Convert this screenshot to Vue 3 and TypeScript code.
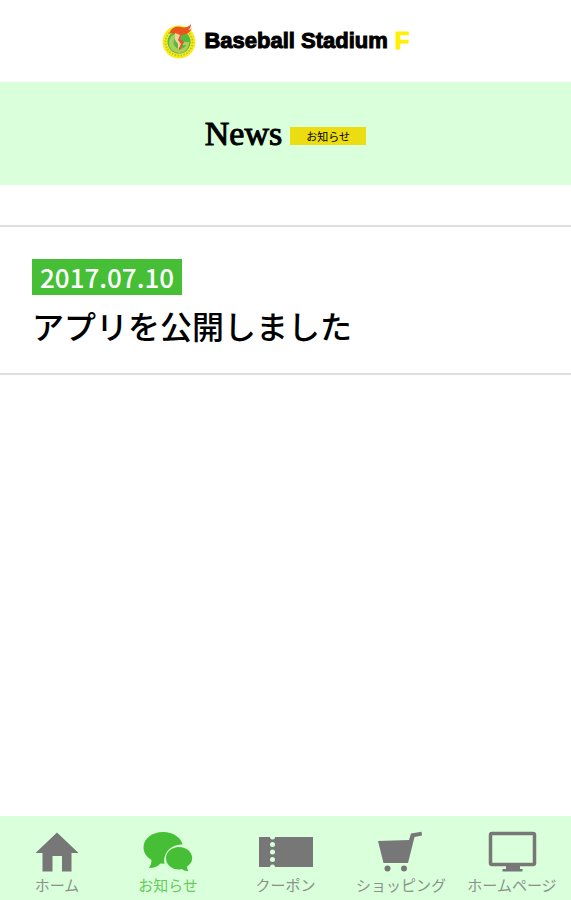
<script setup lang="ts">
import { ref } from 'vue'

type TabId = 'home' | 'news' | 'coupon' | 'shop' | 'web'

interface Tab {
  id: TabId
  label: string
}

interface NewsItem {
  date: string
  title: string
}

const tabs: Tab[] = [
  { id: 'home', label: 'ホーム' },
  { id: 'news', label: 'お知らせ' },
  { id: 'coupon', label: 'クーポン' },
  { id: 'shop', label: 'ショッピング' },
  { id: 'web', label: 'ホームページ' },
]

const news: NewsItem[] = [{ date: '2017.07.10', title: 'アプリを公開しました' }]

const active = ref<TabId>('news')
</script>

<template>
  <div class="app">
    <header class="brand">
      <svg class="emblem" viewBox="0 0 36 36" aria-hidden="true">
        <circle cx="18" cy="19" r="16.500" fill="#f5ec1c" />
        <circle cx="18" cy="19" r="13.500" fill="none" stroke="#c9c12c" stroke-width="2" stroke-dasharray="1.500 1.500" />
        <circle cx="18" cy="19" r="11.500" fill="#58b947" />
        <path d="M19 13a6.500 6.500 0 1 0 6 9h-6v-3h9a10 10 0 1 1-9-9z" fill="#a9d05a" />
        <path d="M8 11C10 5 15 2 20 4c4 1 8 0 10-3 0 3-1 5-3 6 2 0 3-1 4-2-2 5-6 7-11 7l-1 4 4 3-4 8-2-1 1-6-3-4 1-5c-3 0-5-1-8-1z" fill="#e9561f" />
        <path d="M14 10l5 2-2 5 3 4-3 6 0-6-3-4z" fill="#f0d4a0" />
      </svg>
      <span class="brand-name">Baseball Stadium</span>
      <span class="brand-mark">F</span>
    </header>

    <div class="banner">
      <h1>News</h1>
      <span class="banner-tag">お知らせ</span>
    </div>

    <main>
      <ul class="news-list">
        <li v-for="item in news" :key="item.date">
          <a href="#" @click.prevent>
            <time class="date">{{ item.date }}</time>
            <span class="title">{{ item.title }}</span>
          </a>
        </li>
      </ul>
    </main>

    <nav class="tabs">
      <button
        v-for="tab in tabs"
        :key="tab.id"
        type="button"
        class="tab"
        :class="{ active: active === tab.id }"
        @click="active = tab.id"
      >
        <svg class="tab-icon" viewBox="0 0 56 42" fill="currentColor" aria-hidden="true">
          <path v-if="tab.id === 'home'" d="M28 1.500 49.500 22H42.500V40.500H33V25H23.500V40.500H13.500V22H6.500Z" />
          <template v-else-if="tab.id === 'news'">
            <path d="M23 1C12 1 3.500 7.500 3.500 16.500c0 5 3 9.500 8 12.500 0 3-1 5.500-2.500 8 5 0 8.500-1.500 11.500-4.500l4 .2C22.500 22 31 13.500 42.500 13.500 41 6.500 33 1 23 1Z" />
            <path d="M39 16c-7.500 0-13 5-13 11.200S31.500 38.500 39 38.500l3-.3c2 1.300 4 2 6.500 2-1-1.500-1.500-3-1.300-5 3-2 5-4.500 5-8C52.200 21 46.500 16 39 16Z" />
          </template>
          <path
            v-else-if="tab.id === 'coupon'"
            fill-rule="evenodd"
            d="M1 6H12a2.500 2.500 0 0 0 5 0H55V36H17a2.500 2.500 0 0 0-5 0H1ZM14.500 11a2.500 2.500 0 1 0 0 5 2.500 2.500 0 0 0 0-5ZM14.500 18.500a2.500 2.500 0 1 0 0 5 2.500 2.500 0 0 0 0-5ZM14.500 26a2.500 2.500 0 1 0 0 5 2.500 2.500 0 0 0 0-5Z"
          />
          <template v-else-if="tab.id === 'shop'">
            <path d="M5 10 36 9 38 2.500 48.500.8 49 4.500 41.500 6 35 32H10.500Z" />
            <circle cx="14.500" cy="37.500" r="3" />
            <circle cx="31" cy="37.500" r="3" />
          </template>
          <template v-else>
            <rect x="6.500" y="2.500" width="44" height="31" rx="1.500" fill="none" stroke="currentColor" stroke-width="3.500" />
            <path d="M22 34H36V38H38.500V40.500H18.500V38H22Z" />
          </template>
        </svg>
        <span>{{ tab.label }}</span>
      </button>
    </nav>
  </div>
</template>

<style>
body {
  margin: 0;
  background: #fff;
}
</style>

<style scoped>
.app {
  min-height: 100vh;
  display: flex;
  flex-direction: column;
  font-family: "Noto Sans CJK JP", sans-serif;
  color: #000;
}

.brand {
  height: 82px;
  display: flex;
  align-items: center;
  justify-content: center;
  gap: 7px;
}

.emblem {
  width: 36px;
  height: 36px;
}

.brand-name {
  font: bold 22px/36px "Liberation Sans", sans-serif;
  -webkit-text-stroke: 1px #000;
}

.brand-mark {
  font: bold 24px/36px "Liberation Sans", sans-serif;
  color: #fff000;
  -webkit-text-stroke: 1px #fff000;
}

.banner {
  height: 103px;
  display: flex;
  align-items: center;
  justify-content: center;
  gap: 8px;
  background: #d9ffdb;
}

.banner h1 {
  margin: 0;
  font: 34px/40px "Liberation Serif", serif;
  -webkit-text-stroke: 1px #000;
}

.banner-tag {
  width: 76px;
  margin-top: 4px;
  background: #ebdd12;
  font-size: 11px;
  line-height: 18px;
  text-align: center;
}

main {
  flex: 1;
  padding-top: 40px;
}

.news-list {
  margin: 0;
  padding: 0;
  list-style: none;
  border-top: 2px solid #dedede;
}

.news-list li {
  border-bottom: 2px solid #dedede;
}

.news-list a {
  display: flex;
  flex-direction: column;
  align-items: flex-start;
  gap: 10px;
  padding: 32px 32px 28px;
  color: inherit;
  text-decoration: none;
}

.date {
  padding: 0 8px;
  background: #46bf37;
  color: #fff;
  font-size: 26px;
  font-weight: 500;
  line-height: 36px;
}

.title {
  font-size: 32px;
  font-weight: 500;
  line-height: 40px;
}

.tabs {
  position: sticky;
  bottom: 0;
  display: grid;
  grid-template-columns: 114fr 108fr 127fr 104fr 118fr;
  background: #d9ffdb;
}

.tab {
  display: flex;
  flex-direction: column;
  align-items: center;
  gap: 2px;
  min-width: 0;
  padding: 15px 0 5px;
  border: 0;
  background: none;
  color: #777;
  font-family: inherit;
  font-size: 15px;
  line-height: 20px;
  white-space: nowrap;
  cursor: pointer;
}

.tab span {
  opacity: 0.8;
}

.tab.active {
  color: #46bf37;
}

.tab-icon {
  width: 56px;
  height: 42px;
}
</style>
